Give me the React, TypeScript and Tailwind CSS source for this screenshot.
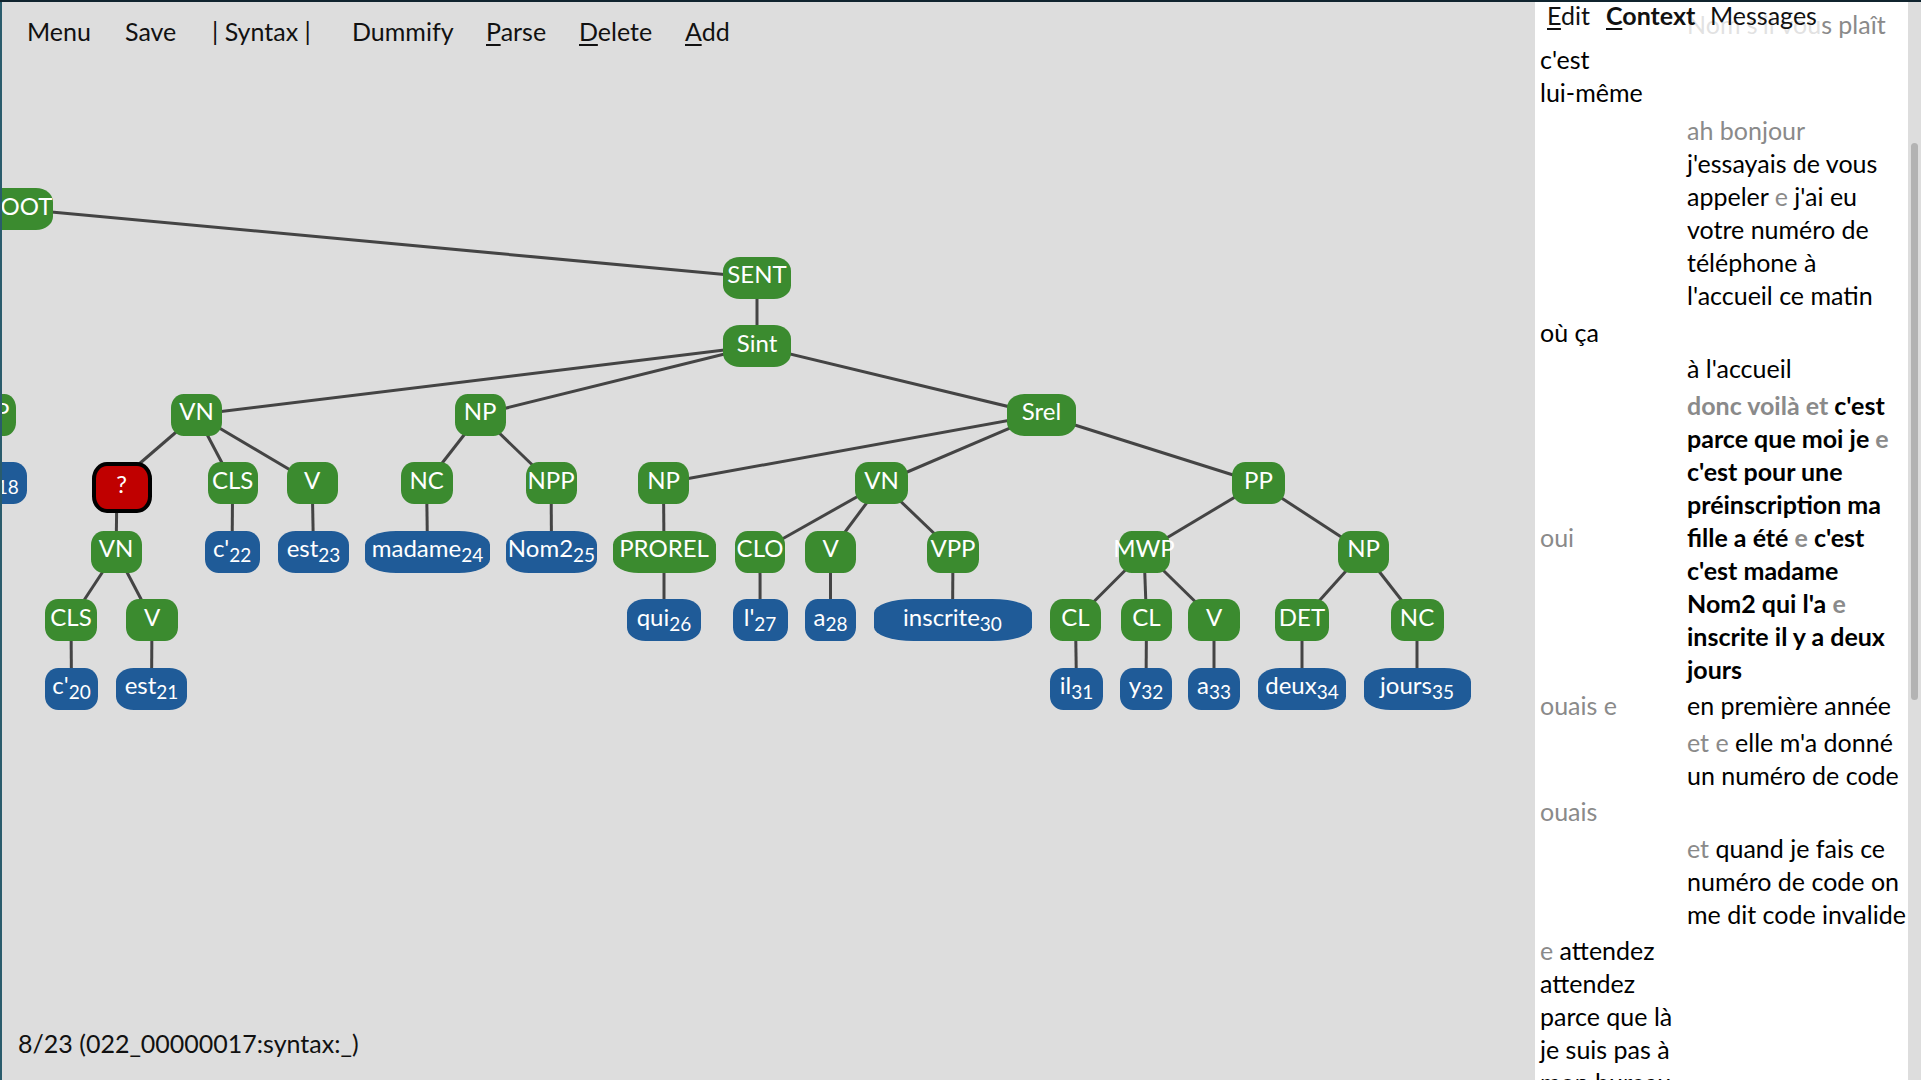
import React from "react";

type NodeT = [string, number, number, number, "g" | "b" | "r", string, string?];

const TOPS = [188, 256.5, 325, 393.5, 462, 530.5, 599, 667.5];
const OX = 2;
const OY = 66;

const NODES: NodeT[] = [
  ["root", 0, -15, 68, "g", "ROOT"],
  ["sent", 1, 723, 68, "g", "SENT"],
  ["sint", 2, 723, 68, "g", "Sint"],
  ["p3", 3, -30, 46, "g", "NP"],
  ["vn3", 3, 171, 51, "g", "VN"],
  ["np3", 3, 454.5, 51, "g", "NP"],
  ["srel", 3, 1007, 69, "g", "Srel"],
  ["b18", 4, -28, 55, "b", "c'", "18"],
  ["q", 4, 91.5, 60, "r", "?"],
  ["cls4", 4, 207.6, 50, "g", "CLS"],
  ["v4", 4, 286.7, 51, "g", "V"],
  ["nc4", 4, 400.6, 52, "g", "NC"],
  ["npp4", 4, 525.6, 51, "g", "NPP"],
  ["np4", 4, 638, 51, "g", "NP"],
  ["vn4", 4, 855, 53, "g", "VN"],
  ["pp4", 4, 1232, 53, "g", "PP"],
  ["vn5", 5, 90.6, 51, "g", "VN"],
  ["c22", 5, 204.6, 55, "b", "c'", "22"],
  ["est23", 5, 278, 71, "b", "est", "23"],
  ["madame", 5, 365, 125, "b", "madame", "24"],
  ["nom2", 5, 506, 91, "b", "Nom2", "25"],
  ["prorel", 5, 612.5, 103, "g", "PROREL"],
  ["clo", 5, 735, 50, "g", "CLO"],
  ["v5", 5, 805, 51, "g", "V"],
  ["vpp", 5, 927, 52, "g", "VPP"],
  ["mwp", 5, 1118.5, 51, "g", "MWP"],
  ["np5", 5, 1338, 51, "g", "NP"],
  ["cls6", 6, 45, 52, "g", "CLS"],
  ["v6", 6, 126, 52, "g", "V"],
  ["qui", 6, 627, 74, "b", "qui", "26"],
  ["l27", 6, 732.6, 55, "b", "l'", "27"],
  ["a28", 6, 805, 51, "b", "a", "28"],
  ["inscrite", 6, 873.5, 158, "b", "inscrite", "30"],
  ["cl6a", 6, 1050, 51, "g", "CL"],
  ["cl6b", 6, 1121, 51, "g", "CL"],
  ["v6b", 6, 1188, 52, "g", "V"],
  ["det", 6, 1275, 54, "g", "DET"],
  ["nc6", 6, 1390.5, 53, "g", "NC"],
  ["c20", 7, 45, 53, "b", "c'", "20"],
  ["est21", 7, 116, 71, "b", "est", "21"],
  ["il", 7, 1050, 53, "b", "il", "31"],
  ["y32", 7, 1120, 52, "b", "y", "32"],
  ["a33", 7, 1188, 52, "b", "a", "33"],
  ["deux", 7, 1258, 88, "b", "deux", "34"],
  ["jours", 7, 1363.5, 107, "b", "jours", "35"],
];

const EDGES: [string, string][] = [
  ["root", "sent"], ["sent", "sint"], ["sint", "vn3"], ["sint", "np3"], ["sint", "srel"],
  ["vn3", "q"], ["vn3", "cls4"], ["vn3", "v4"], ["q", "vn5"], ["vn5", "cls6"], ["vn5", "v6"],
  ["cls6", "c20"], ["v6", "est21"], ["cls4", "c22"], ["v4", "est23"],
  ["np3", "nc4"], ["np3", "npp4"], ["nc4", "madame"], ["npp4", "nom2"],
  ["srel", "np4"], ["srel", "vn4"], ["srel", "pp4"], ["np4", "prorel"], ["prorel", "qui"],
  ["vn4", "clo"], ["vn4", "v5"], ["vn4", "vpp"], ["clo", "l27"], ["v5", "a28"], ["vpp", "inscrite"],
  ["pp4", "mwp"], ["pp4", "np5"], ["mwp", "cl6a"], ["mwp", "cl6b"], ["mwp", "v6b"],
  ["cl6a", "il"], ["cl6b", "y32"], ["v6b", "a33"], ["np5", "det"], ["np5", "nc6"],
  ["det", "deux"], ["nc6", "jours"],
];

function center(id: string): [number, number] {
  const n = NODES.find((x) => x[0] === id)!;
  const w = n[4] === "r" ? 51 : n[3];
  return [n[2] + w / 2 - OX, TOPS[n[1]] + 21 - OY];
}

function TreeNode({ n }: { n: NodeT }) {
  const [, lvl, x, w, t, label, sub] = n;
  const cls =
    t === "g"
      ? "bg-[#3b8b2f] h-[42px]"
      : t === "b"
      ? "bg-[#1f5b98] h-[42px]"
      : "bg-[#c00000] h-[51px] border-[4.5px] border-black";
  return (
    <div
      className={`absolute flex items-center justify-center pb-[7px] rounded-[25%_/_33%] text-white text-[24px] leading-none whitespace-nowrap ${cls}`}
      style={{ left: x - OX, top: TOPS[lvl] - OY, width: w }}
    >
      <span>
        {label}
        {sub && <sub className="text-[19px] relative top-[5px] align-baseline leading-none">{sub}</sub>}
      </span>
    </div>
  );
}

const G = ({ children }: { children: React.ReactNode }) => (
  <span className="text-[#8a8a8a]">{children}</span>
);

function Lines({ lines }: { lines: React.ReactNode[] }) {
  return (
    <div>
      {lines.map((l, i) => (
        <div key={i} className="whitespace-nowrap">
          {l}
        </div>
      ))}
    </div>
  );
}

function Row({ left, right, cls }: { left?: React.ReactNode[]; right?: React.ReactNode[]; cls?: string }) {
  return (
    <div className={`grid grid-cols-[147px_1fr] ${cls ?? ""}`}>
      <div>{left && <Lines lines={left} />}</div>
      <div>{right && <Lines lines={right} />}</div>
    </div>
  );
}

export default function App() {
  return (
    <div className="flex h-screen w-full overflow-hidden border-t-2 border-[#10242e] font-['Lato',sans-serif] text-black">
      {/* Left panel */}
      <div className="flex w-[1535px] shrink-0 flex-col border-l-2 border-[#2a5c6c] bg-[#dddddd]">
        <div className="flex h-[64px] shrink-0 items-center pb-[5px] pl-[25px] text-[25px] text-[#111]">
          <span className="w-[98px]">Menu</span>
          <span className="w-[87px]">Save</span>
          <span className="w-[140px]">| Syntax |</span>
          <span className="w-[134px]">Dummify</span>
          <span className="w-[93px]">
            <u className="decoration-2 underline-offset-[3px]">P</u>arse
          </span>
          <span className="w-[106px]">
            <u className="decoration-2 underline-offset-[3px]">D</u>elete
          </span>
          <span>
            <u className="decoration-2 underline-offset-[3px]">A</u>dd
          </span>
        </div>
        <div className="relative flex-1 overflow-hidden">
          <svg className="absolute inset-0 h-full w-full">
            {EDGES.map(([a, b], i) => {
              const [x1, y1] = center(a);
              const [x2, y2] = center(b);
              return <line key={i} x1={x1} y1={y1} x2={x2} y2={y2} stroke="#444444" strokeWidth={3} />;
            })}
          </svg>
          {NODES.map((n) => (
            <TreeNode key={n[0]} n={n} />
          ))}
        </div>
        <div className="flex h-[72px] shrink-0 items-center pl-[16px] text-[25px] text-[#111]">
          8/23 (022_00000017:syntax:_)
        </div>
      </div>

      {/* Right panel */}
      <div className="flex flex-1 bg-white">
        <div className="relative w-[373px] shrink-0 overflow-hidden">
          <div className="flex flex-col gap-[3.5px] pl-[5px] pt-[6px] text-[25px] leading-[33px]">
            <Row right={[<G>Nom s'il vous plaît</G>]} />
            <Row left={["c'est", "lui-même"]} cls="-mt-[2px] mb-[2px]" />
            <Row
              right={[
                <G>ah bonjour</G>,
                "j'essayais de vous",
                <>appeler <G>e</G> j'ai eu</>,
                "votre numéro de",
                "téléphone à",
                "l'accueil ce matin",
              ]}
            />
            <Row left={["où ça"]} />
            <Row right={["à l'accueil"]} />
            <div className="grid grid-cols-[147px_1fr] font-bold">
              <div className="pt-[132px] font-normal">
                <G>oui</G>
              </div>
              <Lines
                lines={[
                  <><G>donc voilà et</G> c'est</>,
                  <>parce que moi je <G>e</G></>,
                  "c'est pour une",
                  "préinscription ma",
                  <>fille a été <G>e</G> c'est</>,
                  "c'est madame",
                  <>Nom2 qui l'a <G>e</G></>,
                  "inscrite il y a deux",
                  "jours",
                ]}
              />
            </div>
            <Row left={[<G>ouais e</G>]} right={["en première année"]} />
            <Row right={[<><G>et e</G> elle m'a donné</>, "un numéro de code"]} />
            <Row left={[<G>ouais</G>]} />
            <Row right={[<><G>et</G> quand je fais ce</>, "numéro de code on", "me dit code invalide"]} />
            <Row
              left={[<><G>e</G> attendez</>, "attendez", "parce que là", "je suis pas à", "mon bureau"]}
            />
          </div>
          <div className="absolute left-0 top-0 flex h-[34px] w-[287px] items-start bg-white/75 pl-[12px] text-[25px] leading-[27px] text-[#111]">
            <span className="w-[59px]">
              <u className="decoration-2 underline-offset-[3px]">E</u>dit
            </span>
            <span className="w-[104px] font-bold">
              <u className="decoration-2 underline-offset-[3px]">C</u>ontext
            </span>
            <span>Messages</span>
          </div>
        </div>
        <div className="flex-1 bg-[#dddddd] pl-[3px] pt-[141px]">
          <div className="h-[557px] w-[7px] rounded-full bg-[#b3b3b3]" />
        </div>
      </div>
    </div>
  );
}
